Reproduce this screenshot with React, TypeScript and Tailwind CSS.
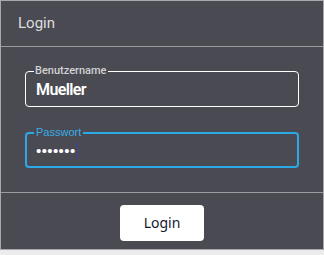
import React from 'react';

const panelBg = 'bg-[#4a4a53]';

export default function App() {
  return (
    <div className="min-h-[255px] w-[324px] bg-[#ececec]">
      <div className={`flex h-[250px] flex-col border border-[#aaa7ab] ${panelBg} font-['Roboto',sans-serif]`}>
        <header className="flex h-[46px] shrink-0 items-center border-b border-[#9c9c9f] px-[17px]">
          <h1 className="text-[15px] leading-none text-[#dedede]">Login</h1>
        </header>

        <div className="flex flex-col gap-[25px] border-b border-[#9c9c9f] px-6 pt-[24px] pb-[24px]">
          <div className="relative flex h-[36px] items-center rounded-[4px] border border-white pl-[10px] pt-[1px]">
            <span className={`absolute left-[8px] top-[-7px] px-[1px] text-[11px] leading-[12px] font-medium text-[#d2d2d4] ${panelBg}`}>
              Benutzername
            </span>
            <span className="text-[16px] leading-none font-semibold tracking-[-0.6px] text-white">Mueller</span>
          </div>

          <div className="relative flex h-[36px] items-center rounded-[4px] border-2 border-[#2aa9e6] pl-[9px]">
            <span
              className={`absolute left-[7px] top-[-8px] px-[2px] font-['Liberation_Sans_Narrow','Liberation_Sans',sans-serif] text-[11px] leading-[12px] text-[#38aee6] ${panelBg}`}
            >
              Passwort
            </span>
            <span className="font-['Liberation_Sans',sans-serif] text-[15px] leading-none tracking-[0.4px] text-white">•••••••</span>
            <span className="h-[17px] w-px bg-[#3b3fa8]" />
          </div>
        </div>

        <div className="flex flex-1 justify-center pt-[12px]">
          <button className="h-[36px] w-[84px] rounded-[4px] bg-white font-['Noto_Sans',sans-serif] text-[14px] leading-none text-[#14182e]">
            Login
          </button>
        </div>
      </div>
    </div>
  );
}
